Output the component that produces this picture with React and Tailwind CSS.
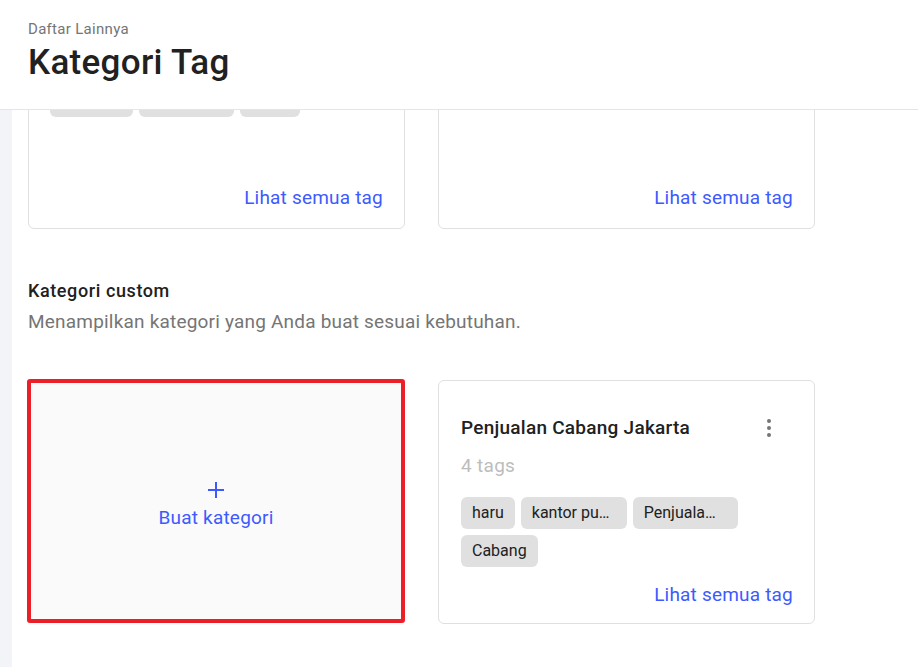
import React from 'react';

const font = { fontFamily: 'Roboto, "Noto Sans", sans-serif' };

function Tag({ children, className = '' }) {
  return (
    <span className={`inline-block h-8 leading-8 px-[11px] rounded-[6px] bg-[#e0e0e0] text-[16px] text-[#212121] whitespace-nowrap ${className}`}>
      {children}
    </span>
  );
}

function Kebab() {
  return (
    <button className="w-6 h-6 mr-[12px] flex flex-col items-center justify-center gap-[3px]">
      <span className="w-1 h-1 rounded-full bg-[#757575]" />
      <span className="w-1 h-1 rounded-full bg-[#757575]" />
      <span className="w-1 h-1 rounded-full bg-[#757575]" />
    </button>
  );
}

function SeeAll() {
  return (
    <div className="flex justify-end">
      <a className="text-[19px] leading-6 tracking-[0.2px] text-[#3d5afe] cursor-pointer">Lihat semua tag</a>
    </div>
  );
}

// top row is scrolled under the header: only the bottom part shows
function ScrolledCard({ pills }) {
  return (
    <div className="h-[261px] bg-white border border-[#e0e0e0] rounded-[6px] px-[21px] pt-[116px] pb-[18px] flex flex-col">
      <div className="flex gap-[6px]">
        {pills.map((w, i) => (
          <span key={i} className={`h-8 rounded-[6px] bg-[#e0e0e0] ${w}`} />
        ))}
      </div>
      <div className="flex-1" />
      <SeeAll />
    </div>
  );
}

function CategoryCard({ title, count, tags }) {
  return (
    <div className="bg-white border border-[#e0e0e0] rounded-[6px] pl-[22px] pr-[21px] pt-[35px] pb-[16px] flex flex-col">
      <div className="flex items-center justify-between">
        <h4 className="text-[19px] leading-6 font-medium tracking-[0.25px] text-[#212121]">{title}</h4>
        <Kebab />
      </div>
      <p className="mt-[14px] text-[19px] leading-6 tracking-[0.3px] text-[#bdbdbd]">{count}</p>
      <div className="mt-[19px] flex flex-wrap gap-[6px]">
        {tags.map((t) => (
          <Tag key={t.label} className={t.w}>{t.label}</Tag>
        ))}
      </div>
      <div className="h-[16px]" />
      <SeeAll />
    </div>
  );
}

export default function App() {
  return (
    <div className="w-[918px] h-[667px] bg-white overflow-hidden flex flex-col" style={font}>
      <header className="h-[110px] shrink-0 bg-white border-b border-[#e5e5e5] pl-[28px] pt-[19px]">
        <p className="text-[15px] leading-5 tracking-[0.3px] text-[#757575]">Daftar Lainnya</p>
        <h1 className="mt-[4px] text-[35px] leading-10 font-medium tracking-[0.3px] text-[#212121]">Kategori Tag</h1>
      </header>

      <div className="flex-1 flex min-h-0">
        <div className="w-[12px] bg-[#f3f4f8] shrink-0" />
        <main className="flex-1 overflow-hidden pl-[16px]">
          <div className="-mt-[142px] w-[787px]">
            <div className="grid grid-cols-[377px_377px] gap-x-[33px]">
              <ScrolledCard pills={['w-[83px]', 'w-[95px]', 'w-[60px]']} />
              <ScrolledCard pills={[]} />
            </div>

            <section className="mt-[50px]">
              <h3 className="text-[18px] leading-6 font-medium tracking-[0.6px] text-[#212121]">Kategori custom</h3>
              <p className="mt-[6px] text-[19px] leading-[26px] tracking-[0.2px] text-[#757575]">
                Menampilkan kategori yang Anda buat sesuai kebutuhan.
              </p>
            </section>

            <div className="mt-[45px] grid grid-cols-[377px_377px] gap-x-[33px]">
              <button className="h-[244px] -my-px -ml-px bg-[#fafafa] border-4 border-[#ec1f29] rounded-[3px] flex flex-col items-center justify-center pt-[10px] gap-2">
                <svg width="16" height="16" viewBox="0 0 16 16" fill="none" stroke="#3d5afe" strokeWidth="2">
                  <path d="M8 0v16M0 8h16" />
                </svg>
                <span className="text-[19px] leading-6 tracking-[0.2px] text-[#3d5afe]">Buat kategori</span>
              </button>
              <CategoryCard
                title="Penjualan Cabang Jakarta"
                count="4 tags"
                tags={[
                  { label: 'haru', w: '' },
                  { label: 'kantor pu…', w: 'w-[106px]' },
                  { label: 'Penjuala…', w: 'w-[105px]' },
                  { label: 'Cabang', w: '' },
                ]}
              />
            </div>
          </div>
        </main>
      </div>
    </div>
  );
}
